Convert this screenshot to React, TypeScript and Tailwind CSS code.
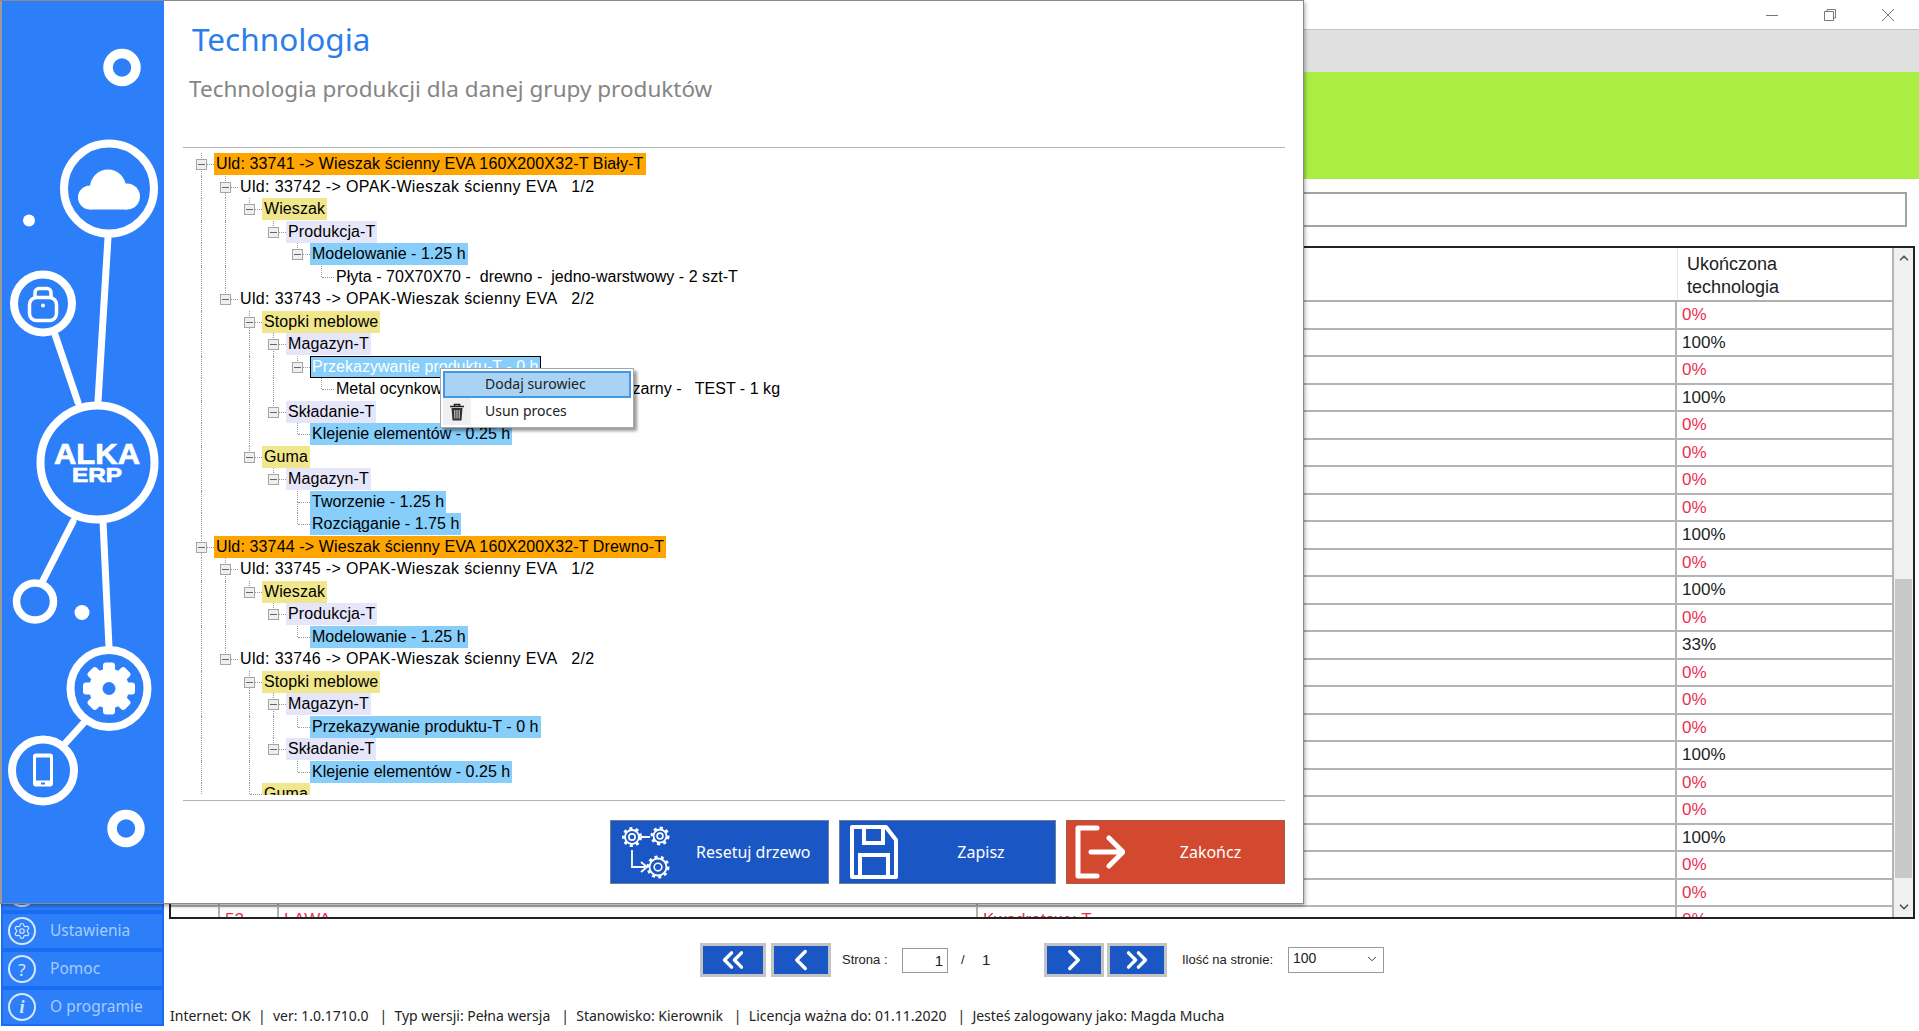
import { ChevronDown, ChevronUp, ChevronLeft, ChevronRight, ChevronsLeft, ChevronsRight, Settings } from "lucide-react";

type Tone = "none" | "orange" | "yellow" | "lavender" | "blue" | "selected";
type Node = { level: number; text: string; tone: Tone };

const tree: Node[] = [
  { level: 0, text: "Uld: 33741 -> Wieszak ścienny EVA 160X200X32-T Biały-T", tone: "orange" },
  { level: 1, text: "Uld: 33742 -> OPAK-Wieszak ścienny EVA   1/2", tone: "none" },
  { level: 2, text: "Wieszak", tone: "yellow" },
  { level: 3, text: "Produkcja-T", tone: "lavender" },
  { level: 4, text: "Modelowanie - 1.25 h", tone: "blue" },
  { level: 5, text: "Płyta - 70X70X70 -  drewno -  jedno-warstwowy - 2 szt-T", tone: "none" },
  { level: 1, text: "Uld: 33743 -> OPAK-Wieszak ścienny EVA   2/2", tone: "none" },
  { level: 2, text: "Stopki meblowe", tone: "yellow" },
  { level: 3, text: "Magazyn-T", tone: "lavender" },
  { level: 4, text: "Przekazywanie produktu-T - 0 h", tone: "selected" },
  { level: 5, text: "Metal ocynkowany - 100X100X10 -  stal-czarny -   TEST - 1 kg", tone: "none" },
  { level: 3, text: "Składanie-T", tone: "lavender" },
  { level: 4, text: "Klejenie elementów - 0.25 h", tone: "blue" },
  { level: 2, text: "Guma", tone: "yellow" },
  { level: 3, text: "Magazyn-T", tone: "lavender" },
  { level: 4, text: "Tworzenie - 1.25 h", tone: "blue" },
  { level: 4, text: "Rozciąganie - 1.75 h", tone: "blue" },
  { level: 0, text: "Uld: 33744 -> Wieszak ścienny EVA 160X200X32-T Drewno-T", tone: "orange" },
  { level: 1, text: "Uld: 33745 -> OPAK-Wieszak ścienny EVA   1/2", tone: "none" },
  { level: 2, text: "Wieszak", tone: "yellow" },
  { level: 3, text: "Produkcja-T", tone: "lavender" },
  { level: 4, text: "Modelowanie - 1.25 h", tone: "blue" },
  { level: 1, text: "Uld: 33746 -> OPAK-Wieszak ścienny EVA   2/2", tone: "none" },
  { level: 2, text: "Stopki meblowe", tone: "yellow" },
  { level: 3, text: "Magazyn-T", tone: "lavender" },
  { level: 4, text: "Przekazywanie produktu-T - 0 h", tone: "blue" },
  { level: 3, text: "Składanie-T", tone: "lavender" },
  { level: 4, text: "Klejenie elementów - 0.25 h", tone: "blue" },
  { level: 2, text: "Guma", tone: "yellow" },
];

const toneClass: Record<Tone, string> = {
  none: "",
  orange: "bg-[#ffa500]",
  yellow: "bg-[#f0e68c]",
  lavender: "bg-[#e6e6fa]",
  blue: "bg-[#87cefa]",
  selected: "bg-[#87cefa] text-white outline outline-1 -outline-offset-1 outline-black",
};

const levelTracking = ["tracking-[0.13px]", "tracking-[0.36px]", "tracking-[0.1px]", "tracking-[0.1px]", "tracking-[0.03px]", "tracking-[0.03px]"];

const percents = ["0", "100", "0", "100", "0", "0", "0", "0", "100", "0", "100", "0", "33", "0", "0", "0", "100", "0", "0", "100", "0", "0", "0"];

// does column `col` still have a sibling coming after row i?
function continues(i: number, col: number) {
  if (col === 0) return true;
  for (let j = i + 1; j < tree.length; j++) {
    if (tree[j].level < col) return false;
    if (tree[j].level === col) return true;
  }
  return false;
}

function TreeRow({ node, index }: { node: Node; index: number }) {
  const next = tree[index + 1];
  const hasChildren = !!next && next.level > node.level;
  const guides = Array.from({ length: node.level }, (_, c) => c);
  return (
    <div className="flex h-[22.5px] items-center whitespace-pre">
      {guides.map((c) => (
        <span key={c} className="relative h-full w-6 shrink-0">
          {continues(index, c) && <span className="absolute left-[11px] top-0 h-full border-l border-dotted border-[#999]" />}
        </span>
      ))}
      <span className="relative h-full w-6 shrink-0">
        <span className="absolute left-[11px] top-0 h-1/2 border-l border-dotted border-[#999]" />
        {continues(index, node.level) && <span className="absolute bottom-0 left-[11px] top-1/2 border-l border-dotted border-[#999]" />}
        <span className="absolute left-[12px] top-1/2 w-3 border-t border-dotted border-[#999]" />
        {hasChildren && (
          <span className="absolute left-[6px] top-[6px] flex h-[11px] w-[11px] items-center justify-center border border-[#a5a5a5] bg-[#efefef]">
            <span className="h-px w-[7px] bg-[#666]" />
          </span>
        )}
      </span>
      <span className={`flex h-[22px] items-center px-[2px] text-[16px] ${levelTracking[node.level]} ${toneClass[node.tone]}`}>{node.text}</span>
    </div>
  );
}

function Gear({ cx, cy, r }: { cx: number; cy: number; r: number }) {
  return (
    <g fill="none" stroke="white">
      <circle cx={cx} cy={cy} r={r} strokeWidth={1.8} />
      <circle cx={cx} cy={cy} r={r + 1.5} strokeWidth={3} strokeDasharray="3 3.2" />
      <circle cx={cx} cy={cy} r={r * 0.45} strokeWidth={1.6} />
    </g>
  );
}

function Illustration() {
  return (
    <svg viewBox="0 0 162 904" className="h-[904px] w-[162px]">
      <g transform="translate(-2 -1.5)">
        <g stroke="white" strokeWidth={7} strokeLinecap="round">
          <line x1={108} y1={238} x2={98} y2={402} />
          <line x1={55} y1={335} x2={78} y2={403} />
          <line x1={73} y1={522} x2={43} y2={581} />
          <line x1={103} y1={522} x2={109} y2={648} />
          <line x1={85} y1={722} x2={66} y2={743} />
        </g>
        <g fill="#2d7ff9" stroke="white">
          <circle cx={122} cy={68} r={14} strokeWidth={9.5} />
          <circle cx={109} cy={189} r={45} strokeWidth={8} />
          <circle cx={43} cy={304} r={29} strokeWidth={8} />
          <circle cx={97.5} cy={463} r={57} strokeWidth={8} />
          <circle cx={35} cy={602} r={18.5} strokeWidth={7.5} />
          <circle cx={109} cy={689} r={38.5} strokeWidth={8} />
          <circle cx={43} cy={771} r={31} strokeWidth={8} />
          <circle cx={126} cy={829} r={14} strokeWidth={9.5} />
        </g>
        <circle cx={29} cy={221} r={6} fill="white" />
        <circle cx={82} cy={613} r={7.5} fill="white" />
        {/* cloud */}
        <g fill="white">
          <circle cx={90} cy={198} r={12} />
          <circle cx={108} cy={188} r={18} />
          <circle cx={127} cy={197} r={13} />
          <rect x={90} y={192} width={37} height={18} />
        </g>
        {/* lock */}
        <g fill="none" stroke="white" strokeWidth={3.5}>
          <rect x={29.5} y={298} width={27} height={23} rx={7} />
          <path d="M35 298v-5a4 4 0 0 1 4-4h8a4 4 0 0 1 4 4v5" />
        </g>
        <circle cx={43} cy={306} r={2} fill="white" />
        {/* gear */}
        <g fill="white">
          <circle cx={109} cy={689} r={20} />
          {[0, 45, 90, 135, 180, 225, 270, 315].map((a) => (
            <rect key={a} x={103} y={663} width={12} height={12} rx={3} transform={`rotate(${a} 109 689)`} />
          ))}
        </g>
        <circle cx={109} cy={689} r={6.5} fill="#2d7ff9" />
        {/* phone */}
        <rect x={33} y={754} width={20} height={33} rx={3} fill="white" />
        <rect x={36} y={758} width={14} height={23} fill="#2d7ff9" />
        <rect x={41} y={783} width={4} height={2} fill="#2d7ff9" />
        <text x={97} y={464} textAnchor="middle" fontFamily="'Liberation Sans', sans-serif" fontWeight={700} fontSize={29} textLength={86} lengthAdjust="spacingAndGlyphs" fill="white" stroke="white" strokeWidth={0.7}>ALKA</text>
        <text x={97} y={482.5} textAnchor="middle" fontFamily="'Liberation Sans', sans-serif" fontWeight={700} fontSize={21} textLength={50} lengthAdjust="spacingAndGlyphs" fill="white" stroke="white" strokeWidth={0.7}>ERP</text>
      </g>
    </svg>
  );
}

function ActionButton({ label, red, textWidth, icon }: { label: string; red?: boolean; textWidth: string; icon: React.ReactNode }) {
  return (
    <button className={`flex h-[64px] items-center border pl-[10px] text-[16px] text-white ${red ? "border-[#a85a48] bg-[#d2492f]" : "border-[#6c7f99] bg-[#1b57c4]"}`}>
      {icon}
      <span className={textWidth}>{label}</span>
    </button>
  );
}

function NavButton({ w, children }: { w: string; children: React.ReactNode }) {
  return (
    <button className={`flex h-[34px] items-center justify-center border-[3px] border-[#c4c4c4] bg-[#1b57c4] text-white ${w}`}>
      {children}
    </button>
  );
}

function SideItem({ label, icon }: { label: string; icon?: React.ReactNode }) {
  return (
    <div className="flex h-[38px] shrink-0 items-center gap-[14px] border-2 border-[#1a6cf5] bg-[#2d7ff9] pl-[5px]">
      <span className="flex h-[28px] w-[28px] items-center justify-center rounded-full border-2 border-[#d8e7ff] text-[#d8e7ff]">{icon}</span>
      <span className="text-[15.5px] text-[#a5ccff]">{label}</span>
    </div>
  );
}

export default function App() {
  return (
    <div className="relative flex h-[1031px] w-[1919px] overflow-hidden bg-white font-['Noto_Sans',sans-serif] text-black">
      {/* main window underneath */}
      <aside className="flex w-[166px] shrink-0 flex-col justify-end pb-[5px] pl-[1px] pr-[2px]">
        <SideItem label="" />
        <SideItem label="Ustawienia" icon={<Settings size={18} strokeWidth={1.6} />} />
        <SideItem label="Pomoc" icon={<span className="text-[17px] leading-none">?</span>} />
        <SideItem label="O programie" icon={<span className="font-['Liberation_Serif',serif] text-[18px] font-bold italic leading-none">i</span>} />
      </aside>

      <main className="flex min-w-0 flex-1 flex-col">
        <div className="flex h-[29px] shrink-0 items-center justify-end gap-[44px] pr-[24px] text-[#777]">
          <svg viewBox="0 0 14 14" className="h-[14px] w-[14px]" fill="none" stroke="currentColor"><path d="M1 7.5h12" /></svg>
          <svg viewBox="0 0 14 14" className="h-[14px] w-[14px]" fill="none" stroke="currentColor"><path d="M1.5 3.5h9v9h-9zM4 3.5v-2h8.500v8.500h-2" /></svg>
          <svg viewBox="0 0 14 14" className="h-[14px] w-[14px]" fill="none" stroke="currentColor"><path d="M1 1l12 12M13 1L1 13" /></svg>
        </div>
        <div className="h-[43px] shrink-0 border-t border-[#c4c4c4] bg-[#e0e0e0]" />
        <div className="h-[107px] shrink-0 bg-[#aaee44]" />
        <div className="ml-[4px] mr-[12px] mt-[13px] h-[35px] shrink-0 border-2 border-[#a3a3a3]" />

        <div className="ml-[3px] mr-[4px] mt-[19px] flex h-[673px] shrink-0 overflow-hidden border-2 border-[#222]">
          <div className="min-w-0 flex-1">
            <div className="flex h-[54px] border-b-2 border-[#b0b0b0]">
              <div className="flex-1" />
              <div className="w-[215px] border-l border-[#e8e8e8] pl-[9px] pt-[5px] font-['Liberation_Sans',sans-serif] text-[18px] leading-[23px] text-[#222]">
                Ukończona<br />technologia
              </div>
            </div>
            {percents.map((p, i) => (
              <div key={i} className="flex h-[27.5px] shrink-0 items-center border-b-2 border-[#b4b4b4] font-['Liberation_Sans',sans-serif] text-[17px]">
                <div className="h-full w-[49px] border-r-2 border-[#b4b4b4]" />
                <div className="flex h-full w-[59px] items-center border-r-2 border-[#b4b4b4] pl-[5px] text-[#e9304f]">{i === 22 ? "52" : ""}</div>
                <div className="flex h-full w-[699px] items-center border-r-2 border-[#b4b4b4] pl-[5px] text-[#e9304f]">{i === 22 ? "ŁAWA" : ""}</div>
                <div className="flex h-full flex-1 items-center border-r-2 border-[#b4b4b4] pl-[5px] text-[#e9304f]">{i === 22 ? "Kwadratowy-T" : ""}</div>
                <div className={`flex h-full w-[215px] items-center pl-[5px] ${p === "0" ? "text-[#e9304f]" : "text-[#222]"}`}>{p}%</div>
              </div>
            ))}
          </div>
          <div className="relative w-[21px] shrink-0 border-l-2 border-[#b4b4b4] bg-[#f0f0f0]">
            <div className="flex h-[20px] items-center justify-center text-[#555]"><ChevronUp size={14} strokeWidth={3} /></div>
            <div className="absolute left-[1px] right-[1px] top-[331px] h-[299px] bg-[#c8c8c8]" />
            <div className="absolute bottom-0 left-0 right-0 flex h-[20px] items-center justify-center text-[#555]"><ChevronDown size={14} strokeWidth={3} /></div>
          </div>
        </div>

        <div className="mt-[24px] flex h-[34px] shrink-0 items-center pl-[534px] font-['Liberation_Sans',sans-serif] text-[13px] text-[#222]">
          <NavButton w="w-[66px]"><ChevronsLeft size={34} strokeWidth={2.4} /></NavButton>
          <NavButton w="ml-[5px] w-[60px]"><ChevronLeft size={34} strokeWidth={2.4} /></NavButton>
          <span className="ml-[11px] w-[60px]">Strona :</span>
          <span className="h-[25px] w-[46px] border border-[#999] pr-[4px] text-right text-[15px] leading-[24px]">1</span>
          <span className="ml-[13px] w-[21px]">/</span>
          <span className="w-[62px] text-[15px]">1</span>
          <NavButton w="w-[60px]"><ChevronRight size={34} strokeWidth={2.4} /></NavButton>
          <NavButton w="ml-[3px] w-[60px]"><ChevronsRight size={34} strokeWidth={2.4} /></NavButton>
          <span className="ml-[15px] w-[106px]">Ilość na stronie:</span>
          <span className="flex h-[26px] w-[96px] items-center justify-between border border-[#999] px-[4px] pb-[3px] text-[14px]">
            100 <ChevronDown size={14} strokeWidth={1.5} />
          </span>
        </div>

        <div className="mt-[29px] whitespace-pre pl-[4px] text-[14px] leading-[20px] text-[#222]">
          Internet: OK  |  ver: 1.0.1710.0   |  Typ wersji: Pełna wersja   |  Stanowisko: Kierownik   |  Licencja ważna do: 01.11.2020   |  Jesteś zalogowany jako: Magda Mucha
        </div>
      </main>

      {/* technology dialog on top */}
      <div className="absolute left-0 top-0 flex h-[904px] w-[1304px] border-r border-b border-t border-[#8a8a8a] bg-white shadow-[1px_2px_4px_rgba(0,0,0,0.35)]">
        <div className="w-[164px] shrink-0 border-l-2 border-[#9a9a9a] bg-[#2d7ff9]">
          <Illustration />
        </div>
        <div className="relative flex min-w-0 flex-1 flex-col pl-[19px] pr-[18px]">
          <div className="h-[147px] shrink-0 border-b border-[#b4b4b4]">
            <h1 className="ml-[9px] mt-[16px] text-[31.5px] leading-[44px] text-[#2b7de9]">Technologia</h1>
            <p className="ml-[6px] mt-[12px] text-[22.5px] leading-[32px] text-[#858585]">Technologia produkcji dla danej grupy produktów</p>
          </div>
          <div className="mt-[5px] h-[642px] shrink-0 overflow-hidden pl-[7px] font-['Liberation_Sans',sans-serif] text-black">
            {tree.map((n, i) => (
              <TreeRow key={i} node={n} index={i} />
            ))}
          </div>
          <div className="mt-[5px] flex shrink-0 justify-end gap-[10px] border-t border-[#b4b4b4] pt-[19px]">
            <ActionButton
              label="Resetuj drzewo"
              textWidth="w-[155px] pl-[23px] text-left"
              icon={
                <svg viewBox="0 0 52 56" className="h-[56px] w-[52px] shrink-0">
                  <Gear cx={11} cy={13} r={7} />
                  <Gear cx={39} cy={12} r={6.5} />
                  <Gear cx={37} cy={43} r={8.5} />
                  <path d="M20 13h9M11 26v17h13M20 38l6 5-6 5" fill="none" stroke="white" strokeWidth={1.8} />
                </svg>
              }
            />
            <ActionButton
              label="Zapisz"
              textWidth="w-[154px] text-center pl-[6px]"
              icon={
                <svg viewBox="0 0 52 56" className="-ml-[1px] h-[56px] w-[52px] shrink-0">
                  <path d="M3 3h34l10 13v37H3z" fill="none" stroke="white" strokeWidth={4} strokeLinejoin="round" />
                  <path d="M15 3v16h19V3M11 53V31h28v22" fill="none" stroke="white" strokeWidth={4} />
                </svg>
              }
            />
            <ActionButton
              label="Zakończ"
              red
              textWidth="w-[155px] text-center pl-[8px]"
              icon={
                <svg viewBox="0 0 52 56" className="-ml-[4px] mr-[4px] h-[56px] w-[52px] shrink-0">
                  <path d="M24 4H5v48h19" fill="none" stroke="white" strokeWidth={5} strokeLinecap="round" strokeLinejoin="round" />
                  <path d="M18 28h31M36 14l14 14-14 14" fill="none" stroke="white" strokeWidth={5} strokeLinecap="round" strokeLinejoin="round" />
                </svg>
              }
            />
          </div>

          {/* context menu */}
          <div className="absolute left-[276px] top-[367px] w-[194px] border border-[#a8a8a8] bg-white p-[2px] font-['Noto_Sans',sans-serif] text-[14px] text-[#222] shadow-[3px_3px_3px_rgba(0,0,0,0.4)]">
            <div className="flex h-[27px] items-center border-2 border-[#3f98ea] bg-[#a9d2f3] pb-[2px] pl-[40px]">Dodaj surowiec</div>
            <div className="flex h-[27px] items-center">
              <span className="flex h-full w-[28px] items-center justify-center bg-[#f0f0f0]">
                <svg viewBox="0 0 16 18" className="h-[18px] w-[16px]">
                  <path d="M1 3.5h14M5.500 3V1.500h5V3" fill="none" stroke="#222" strokeWidth={1.6} />
                  <path d="M2.500 5h11l-1 12.500h-9z" fill="#333" />
                  <path d="M5.800 7v8.500M8 7v8.500M10.200 7v8.500" stroke="#ddd" strokeWidth={1} />
                </svg>
              </span>
              <span className="pb-[2px] pl-[14px]">Usun proces</span>
            </div>
          </div>
        </div>
      </div>
    </div>
  );
}
